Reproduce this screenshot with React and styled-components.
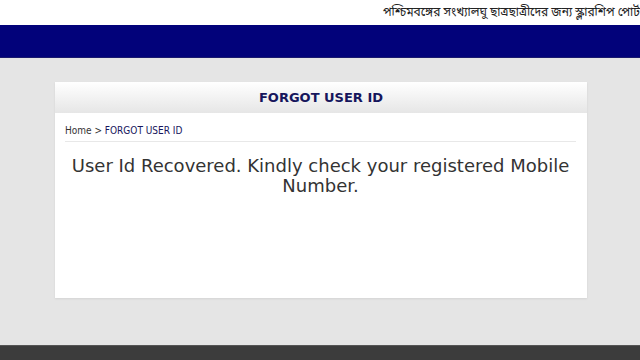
import React from "react";
import styled, { createGlobalStyle } from "styled-components";

const GlobalStyle = createGlobalStyle`
  html, body {
    margin: 0;
    padding: 0;
    background: #e5e5e5;
    font-family: "DejaVu Sans", Verdana, sans-serif;
  }
`;

const Page = styled.div`
  width: 640px;
  height: 360px;
  display: flex;
  flex-direction: column;
  overflow: hidden;
`;

const TopStrip = styled.div`
  height: 25px;
  background: #ffffff;
  display: flex;
  align-items: center;
  padding-left: 383px;
  white-space: nowrap;
  overflow: hidden;
  font-family: "Noto Sans Bengali", "Noto Sans", "DejaVu Sans", sans-serif;
  font-size: 12px;
  color: #222222;
`;

const NavBar = styled.div`
  height: 32px;
  background: #02027a;
  border-bottom: 1px solid #1a1a6e;
`;

const Main = styled.div`
  flex: 1;
  padding: 24px 53px 0 55px;
`;

const Card = styled.div`
  background: #ffffff;
  height: 216px;
  box-shadow: 0 1px 2px rgba(0, 0, 0, 0.08);
  display: flex;
  flex-direction: column;
`;

const CardHeader = styled.div`
  height: 31px;
  background: linear-gradient(#ffffff, #e6e6e6);
  display: flex;
  align-items: center;
  justify-content: center;
  font-size: 13px;
  font-weight: bold;
  color: #16165c;
`;

const CardBody = styled.div`
  padding: 12px 11px 0 10px;
`;

const Crumbs = styled.div`
  font-family: "DejaVu Sans Condensed", "DejaVu Sans", sans-serif;
  font-size: 10px;
  color: #333333;
  padding-bottom: 5px;
  border-bottom: 1px solid #e8e8e8;
`;

const CrumbCurrent = styled.span`
  color: #16165c;
`;

const Message = styled.p`
  margin: 14px 0 0;
  text-align: center;
  font-size: 18px;
  line-height: 20px;
  color: #333333;
`;

const Footer = styled.div`
  height: 14px;
  background: #3c3c3c;
  border-top: 1px solid #555555;
`;

export default function App() {
  return (
    <>
      <GlobalStyle />
      <Page>
        <TopStrip>পশ্চিমবঙ্গের সংখ্যালঘু ছাত্রছাত্রীদের জন্য স্কলারশিপ পোর্টাল</TopStrip>
        <NavBar />
        <Main>
          <Card>
            <CardHeader>FORGOT USER ID</CardHeader>
            <CardBody>
              <Crumbs>
                Home &gt; <CrumbCurrent>FORGOT USER ID</CrumbCurrent>
              </Crumbs>
              <Message>
                User Id Recovered. Kindly check your registered Mobile Number.
              </Message>
            </CardBody>
          </Card>
        </Main>
        <Footer />
      </Page>
    </>
  );
}
